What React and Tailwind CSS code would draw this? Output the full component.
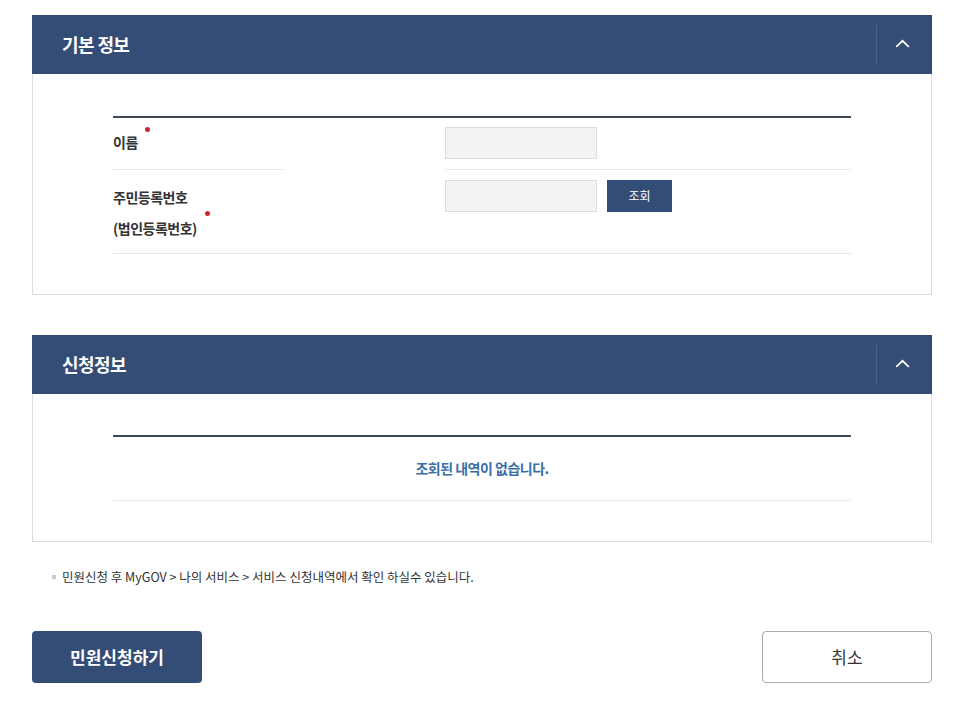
import React from 'react';

const font = { fontFamily: '"Noto Sans CJK KR", "Noto Sans", sans-serif' };

const ChevronUp = () => (
  <svg width="15" height="9" viewBox="0 0 15 9" fill="none">
    <path d="M1.2 7.8 L7.5 1.8 L13.8 7.8" stroke="#ffffff" strokeWidth="1.8" />
  </svg>
);

const PanelHeader = ({ title }) => (
  <div className="flex h-[59px] items-center justify-between bg-[#344d77]">
    <h2 className="pl-[30px] text-[18px] font-bold tracking-[-0.6px] text-white">{title}</h2>
    <div className="flex h-[40px] items-center border-l border-[#4a628a]">
      <button className="flex w-[55px] items-center justify-center pb-[2px] pr-[5px]">
        <ChevronUp />
      </button>
    </div>
  </div>
);

export default function App() {
  return (
    <div className="min-h-[707px] bg-white pl-[32px] pr-[31px] pt-[15px] text-[#333]" style={font}>
      {/* 기본 정보 */}
      <section>
        <PanelHeader title="기본 정보" />
        <div className="border border-t-0 border-[#dcdcdc] px-[80px] pb-[40px] pt-[42px]">
          <div className="border-t-2 border-[#3d4854]">
            {/* 이름 */}
            <div className="flex">
              <div className="flex h-[52px] w-[171px] items-center border-b border-[#e8e8e8] pb-[2px]">
                <span className="relative text-[14px] font-bold tracking-[-0.5px]">
                  이름
                  <span className="absolute -right-[12px] -top-[5px] h-[5px] w-[5px] rounded-full bg-[#d0262a]" />
                </span>
              </div>
              <div className="w-[161px]" />
              <div className="flex flex-1 items-start border-b border-[#e8e8e8] pt-[9px]">
                <input className="h-[32px] w-[152px] border border-[#dddddd] bg-[#f3f3f3] outline-none" />
              </div>
            </div>
            {/* 주민등록번호 */}
            <div className="flex h-[84px] border-b border-[#e8e8e8]">
              <div className="w-[171px] pt-[12px] text-[14px] font-bold leading-[31px] tracking-[-0.5px]">
                <div>주민등록번호</div>
                <div className="relative inline-block">
                  (법인등록번호)
                  <span className="absolute -right-[13px] top-[-2px] h-[5px] w-[5px] rounded-full bg-[#d0262a]" />
                </div>
              </div>
              <div className="w-[161px]" />
              <div className="flex flex-1 items-start gap-[10px] pt-[10px]">
                <input className="h-[32px] w-[152px] border border-[#dddddd] bg-[#f3f3f3] outline-none" />
                <button className="h-[32px] w-[65px] bg-[#344d77] text-[12px] text-white">조회</button>
              </div>
            </div>
          </div>
        </div>
      </section>

      {/* 신청정보 */}
      <section className="mt-[40px]">
        <PanelHeader title="신청정보" />
        <div className="border border-t-0 border-[#dcdcdc] px-[80px] pb-[40px] pt-[41px]">
          <div className="flex h-[66px] items-center justify-center border-y border-b-[#e8e8e8] border-t-2 border-t-[#3d4854] text-[14px] font-bold tracking-[-0.5px] text-[#3a6ea8]">
            조회된 내역이 없습니다.
          </div>
        </div>
      </section>

      {/* 안내 */}
      <p className="mt-[26px] flex items-center pl-[20px] text-[12.5px] tracking-[0px] text-[#333]">
        <span className="mr-[6px] h-[4px] w-[4px] bg-[#c8c8c8]" />
        민원신청 후 MyGOV &gt; 나의 서비스 &gt; 서비스 신청내역에서 확인 하실수 있습니다.
      </p>

      {/* 버튼 */}
      <div className="mt-[44px] flex justify-between">
        <button className="h-[52px] w-[170px] rounded-[4px] bg-[#344d77] text-[17px] font-bold text-white">
          민원신청하기
        </button>
        <button className="h-[52px] w-[170px] rounded-[4px] border border-[#aaaaaa] bg-white text-[17px] text-[#333]">
          취소
        </button>
      </div>
    </div>
  );
}
